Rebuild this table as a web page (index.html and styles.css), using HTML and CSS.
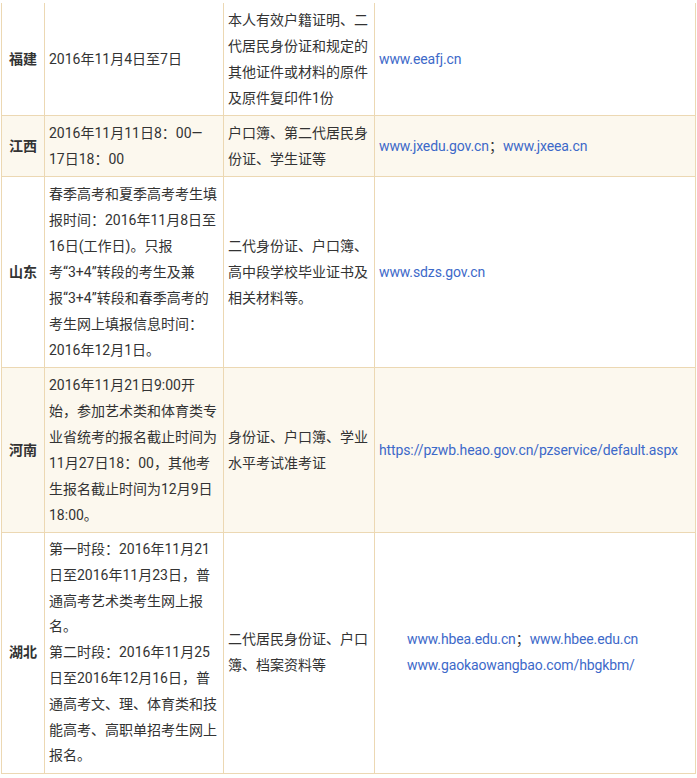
FILE: index.html
```html
<!DOCTYPE html>
<html lang="zh-CN">
<head>
<meta charset="utf-8">
<title>报名时间表</title>
<link rel="stylesheet" href="styles.css">
</head>
<body>
<table class="sched">
  <colgroup>
    <col class="c-prov">
    <col class="c-time">
    <col class="c-mat">
    <col class="c-web">
  </colgroup>
  <tbody>
    <tr class="row-first">
      <td class="prov">福建</td>
      <td>2016年11月4日至7日</td>
      <td>本人有效户籍证明、二<br>代居民身份证和规定的<br>其他证件或材料的原件<br>及原件复印件1份</td>
      <td><a class="link">www.eeafj.cn</a></td>
    </tr>
    <tr class="alt">
      <td class="prov">江西</td>
      <td>2016年11月11日8：00—<br>17日18：00</td>
      <td>户口簿、第二代居民身<br>份证、学生证等</td>
      <td><a class="link">www.jxedu.gov.cn</a>；<a class="link">www.jxeea.cn</a></td>
    </tr>
    <tr>
      <td class="prov">山东</td>
      <td>春季高考和夏季高考考生填<br>报时间：2016年11月8日至<br>16日(工作日)。只报<br>考“3+4”转段的考生及兼<br>报“3+4”转段和春季高考的<br>考生网上填报信息时间：<br>2016年12月1日。</td>
      <td>二代身份证、户口簿、<br>高中段学校毕业证书及<br>相关材料等。</td>
      <td><a class="link">www.sdzs.gov.cn</a></td>
    </tr>
    <tr class="alt">
      <td class="prov">河南</td>
      <td>2016年11月21日9:00开<br>始，参加艺术类和体育类专<br>业省统考的报名截止时间为<br>11月27日18：00，其他考<br>生报名截止时间为12月9日<br>18:00。</td>
      <td>身份证、户口簿、学业<br>水平考试准考证</td>
      <td><a class="link">https://pzwb.heao.gov.cn/pzservice/default.aspx</a></td>
    </tr>
    <tr class="last">
      <td class="prov">湖北</td>
      <td>第一时段：2016年11月21<br>日至2016年11月23日，普<br>通高考艺术类考生网上报<br>名。<br>第二时段：2016年11月25<br>日至2016年12月16日，普<br>通高考文、理、体育类和技<br>能高考、高职单招考生网上<br>报名。</td>
      <td>二代居民身份证、户口<br>簿、档案资料等</td>
      <td class="indent"><a class="link">www.hbea.edu.cn</a>；<a class="link">www.hbee.edu.cn</a><br><a class="link">www.gaokaowangbao.com/hbgkbm/</a></td>
    </tr>
  </tbody>
</table>
</body>
</html>
```
FILE: styles.css
```css
html, body {
  margin: 0;
  padding: 0;
  background: #ffffff;
}
body {
  font-family: Roboto, "Noto Sans CJK SC", sans-serif;
  font-size: 14px;
  color: #333333;
}
.sched {
  border-collapse: collapse;
  table-layout: fixed;
  width: 694px;
  margin: 3px 0 0 1px;
  border-top: none;
}
.c-prov { width: 43px; }
.c-time { width: 179px; }
.c-mat { width: 151px; }
.c-web { width: 321px; }
.sched td {
  border: 1px solid #ecd8b3;
  padding: 4px;
  line-height: 26px;
  vertical-align: middle;
  white-space: nowrap;
  overflow: hidden;
}
.sched tr.row-first td {
  border-top: none;
}
.sched tr.last td {
  line-height: 25.8px;
}
.sched tr.alt td {
  background: #fcf8ee;
}
.sched td.prov {
  font-weight: bold;
  text-align: center;
  padding-left: 0;
  padding-right: 0;
}
.link {
  color: #3d69c9;
  text-decoration: none;
  letter-spacing: -0.12px;
}
.sched tr.last td.indent {
  padding-left: 32px;
}
```
